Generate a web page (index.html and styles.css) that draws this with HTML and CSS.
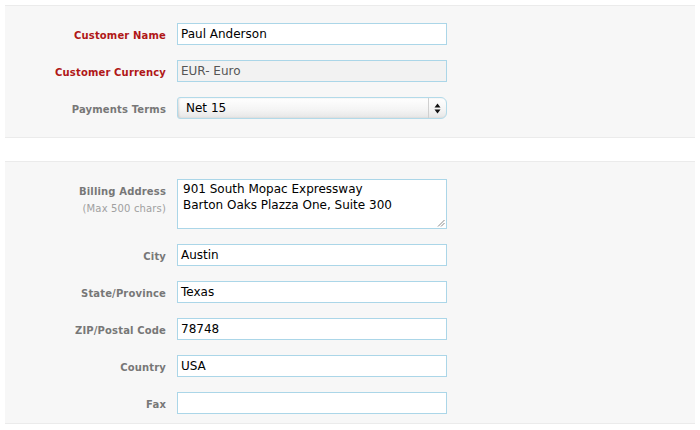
FILE: index.html
```html
<!DOCTYPE html>
<html>
<head>
<meta charset="utf-8">
<link rel="stylesheet" href="styles.css">
</head>
<body>
<div class="page">
  <section class="panel panel-top">
    <div class="row">
      <label class="label req">Customer Name</label>
      <div class="field">Paul Anderson</div>
    </div>
    <div class="row">
      <label class="label req">Customer Currency</label>
      <div class="field disabled">EUR- Euro</div>
    </div>
    <div class="row">
      <label class="label">Payments Terms</label>
      <div class="select">
        <span class="select-text">Net 15</span>
        <span class="select-btn">
          <svg width="7" height="11" viewBox="0 0 7 11"><path d="M3.5 0.5 L6.5 4.5 H0.5 Z" fill="#111"/><path d="M0.5 6.5 H6.5 L3.5 10.5 Z" fill="#111"/></svg>
        </span>
      </div>
    </div>
  </section>
  <section class="panel panel-bottom">
    <div class="row row-area">
      <label class="label">Billing Address<span class="hint">(Max 500 chars)</span></label>
      <div class="field area">901 South Mopac Expressway<br>Barton Oaks Plazza One, Suite 300
        <svg class="grip" width="8" height="8" viewBox="0 0 8 8"><path d="M1 7.5 L7.5 1 M4 7.5 L7.5 4" stroke="#888" stroke-width="1"/></svg>
      </div>
    </div>
    <div class="row">
      <label class="label">City</label>
      <div class="field">Austin</div>
    </div>
    <div class="row">
      <label class="label">State/Province</label>
      <div class="field">Texas</div>
    </div>
    <div class="row">
      <label class="label">ZIP/Postal Code</label>
      <div class="field">78748</div>
    </div>
    <div class="row">
      <label class="label">Country</label>
      <div class="field">USA</div>
    </div>
    <div class="row">
      <label class="label">Fax</label>
      <div class="field"></div>
    </div>
  </section>
</div>
</body>
</html>
```

FILE: styles.css
```css
html, body {
  margin: 0;
  padding: 0;
  background: #ffffff;
}
.page {
  padding: 5px 5px 0 5px;
  display: flex;
  flex-direction: column;
  gap: 23px;
}
.panel {
  background: #f7f7f7;
  border-top: 1px solid #ebebeb;
  border-bottom: 1px solid #ebebeb;
  display: flex;
  flex-direction: column;
  gap: 15px;
}
.panel-top {
  padding: 17px 0 18px 0;
}
.panel-bottom {
  padding: 17px 0 9px 0;
}
.row {
  display: flex;
  align-items: flex-start;
  gap: 11px;
}
.label {
  width: 161px;
  text-align: right;
  font-family: "DejaVu Sans", sans-serif;
  font-weight: bold;
  font-size: 10px;
  color: #777777;
  padding-top: 7px;
  letter-spacing: 0.15px;
}
.label.req {
  color: #b01717;
}
.hint {
  display: block;
  font-weight: normal;
  color: #a0a0a0;
  margin-top: 6px;
}
.field {
  box-sizing: border-box;
  width: 270px;
  height: 22px;
  border: 1px solid #abd6e8;
  background: #ffffff;
  font-family: "DejaVu Sans", sans-serif;
  font-size: 12px;
  line-height: 20px;
  padding: 0 3px;
  color: #000;
}
.field.disabled {
  background: #f2f2f2;
  color: #555555;
}
.field.area {
  height: 50px;
  line-height: 16px;
  padding: 1px 5px;
  position: relative;
}
.grip {
  position: absolute;
  right: 1px;
  bottom: 1px;
}
.select {
  box-sizing: border-box;
  width: 270px;
  height: 22px;
  border: 1px solid #b3dae9;
  border-radius: 3px 6px 6px 3px;
  background: linear-gradient(#ffffff, #f4f4f4 60%, #e6e6e6);
  box-shadow: inset 1px 0 2px rgba(0,0,0,0.12);
  display: flex;
  align-items: stretch;
  font-family: "DejaVu Sans", sans-serif;
  font-size: 12px;
}
.select-text {
  flex: 1;
  padding-left: 8px;
  line-height: 20px;
  color: #000;
}
.select-btn {
  width: 17px;
  border-left: 1px solid #d0d0d0;
  display: flex;
  align-items: center;
  justify-content: center;
}
```
